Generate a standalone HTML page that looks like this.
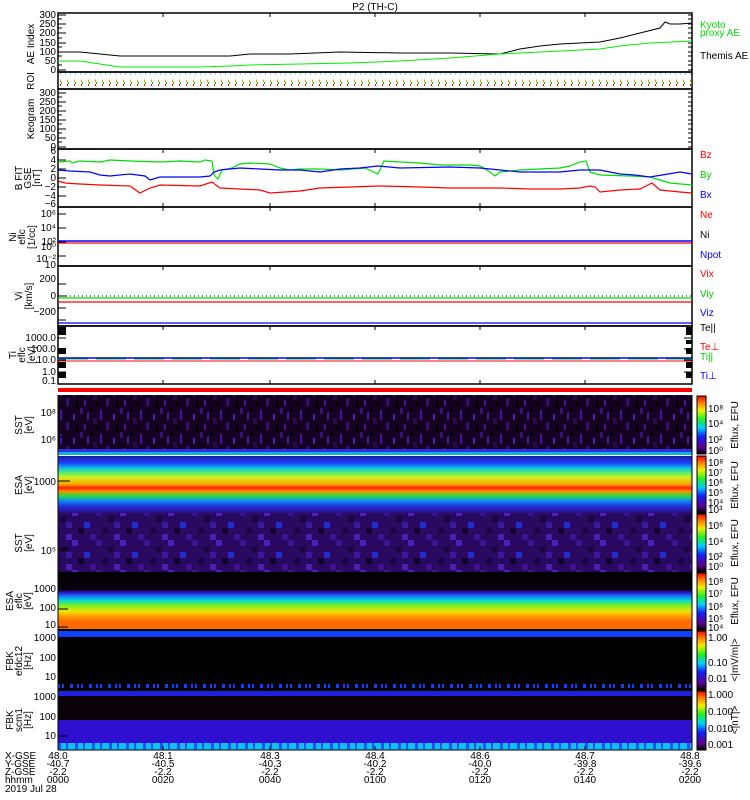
<!DOCTYPE html>
<html><head><meta charset="utf-8"><style>
body{margin:0;background:#fff;width:750px;height:800px;overflow:hidden}
svg{display:block}
text{font-family:"Liberation Sans",sans-serif;font-size:10px}
</style></head><body>
<svg width="750" height="800" viewBox="0 0 750 800" xmlns="http://www.w3.org/2000/svg">
<defs>
<linearGradient id="esa1" x1="0" y1="0" x2="0" y2="1">
<stop offset="0" stop-color="#1a1aa0"/><stop offset="0.12" stop-color="#1a40ff"/><stop offset="0.22" stop-color="#10c8e0"/><stop offset="0.3" stop-color="#60f060"/><stop offset="0.38" stop-color="#d8f020"/><stop offset="0.5" stop-color="#ffa000"/><stop offset="0.56" stop-color="#ff2000"/><stop offset="0.62" stop-color="#ff9000"/><stop offset="0.7" stop-color="#20e040"/><stop offset="0.78" stop-color="#1090f0"/><stop offset="0.88" stop-color="#2030e0"/><stop offset="1" stop-color="#2a1080"/>
</linearGradient>
<linearGradient id="esa2" x1="0" y1="0" x2="0" y2="1">
<stop offset="0" stop-color="#000"/><stop offset="0.3" stop-color="#080010"/><stop offset="0.35" stop-color="#3010c0"/><stop offset="0.42" stop-color="#1080ff"/><stop offset="0.5" stop-color="#10e0c0"/><stop offset="0.58" stop-color="#80f020"/><stop offset="0.68" stop-color="#f0e000"/><stop offset="0.76" stop-color="#ffa000"/><stop offset="0.85" stop-color="#ff6a00"/><stop offset="1" stop-color="#ff6a00"/>
</linearGradient>
<linearGradient id="cb1" x1="0" y1="1" x2="0" y2="0">
<stop offset="0" stop-color="#000"/><stop offset="0.12" stop-color="#600090"/><stop offset="0.3" stop-color="#1020ff"/><stop offset="0.45" stop-color="#00d0ff"/><stop offset="0.6" stop-color="#20f020"/><stop offset="0.75" stop-color="#f0f000"/><stop offset="0.88" stop-color="#ff8000"/><stop offset="1" stop-color="#ff0000"/>
</linearGradient>
<pattern id="noise" width="40" height="24" patternUnits="userSpaceOnUse">
<rect width="40" height="24" fill="#140020"/>
<rect x="0" y="0" width="3" height="6" fill="#3a1070"/><rect x="7" y="4" width="2" height="8" fill="#501890"/><rect x="13" y="10" width="4" height="6" fill="#2a0850"/><rect x="20" y="2" width="2" height="10" fill="#4a10a0"/><rect x="26" y="14" width="3" height="8" fill="#3a1070"/><rect x="33" y="6" width="2" height="6" fill="#5020a0"/><rect x="4" y="16" width="2" height="6" fill="#4a1090"/><rect x="16" y="18" width="3" height="4" fill="#000"/><rect x="36" y="18" width="3" height="6" fill="#000"/><rect x="10" y="0" width="2" height="4" fill="#000"/>
</pattern>
<pattern id="noise2" width="48" height="30" patternUnits="userSpaceOnUse">
<rect width="48" height="30" fill="#2a0a60"/>
<rect x="0" y="0" width="6" height="6" fill="#3c1490"/><rect x="12" y="6" width="6" height="6" fill="#1a0640"/><rect x="24" y="0" width="6" height="6" fill="#4a20c0"/><rect x="36" y="12" width="6" height="6" fill="#2030d0"/><rect x="6" y="18" width="6" height="6" fill="#1a0640"/><rect x="18" y="24" width="6" height="6" fill="#4a20b0"/><rect x="30" y="18" width="6" height="6" fill="#120430"/><rect x="42" y="24" width="6" height="6" fill="#3c1490"/><rect x="18" y="12" width="6" height="6" fill="#3a18a0"/>
</pattern>
</defs>

<text x="375" y="10" text-anchor="middle">P2 (TH-C)</text>

<g fill="none" stroke="#000" stroke-width="1.5">
<rect x="58" y="13" width="634" height="59"/>
<rect x="58" y="72" width="634" height="17"/>
<rect x="58" y="89" width="634" height="60"/>
<rect x="58" y="149" width="634" height="58"/>
<rect x="58" y="207" width="634" height="59"/>
<rect x="58" y="266" width="634" height="60"/>
<rect x="58" y="326" width="634" height="58"/>
</g>
<g stroke="#000" stroke-width="1">
<path d="M163 13v4M270 13v4M375 13v4M480 13v4M585 13v4M163 149v4M270 149v4M375 149v4M480 149v4M585 149v4M163 203v4M270 203v4M375 203v4M480 203v4M585 203v4M163 207v4M270 207v4M375 207v4M480 207v4M585 207v4M163 266v4M270 266v4M375 266v4M480 266v4M585 266v4M163 326v4M270 326v4M375 326v4M480 326v4M585 326v4M163 380v4M270 380v4M375 380v4M480 380v4M585 380v4"/>
</g>
<g stroke="#000">
<path d="M58 15h8M58 24h8M58 33h8M58 43h8M58 52h8M58 61h8M58 70h8M58 93h8M58 102h8M58 111h8M58 120h8M58 129h8M58 138h8M58 147h8"/>
<path d="M58 19h4M58 28h4M58 38h4M58 47h4M58 56h4M58 65h4M58 97h4M58 106h4M58 115h4M58 124h4M58 133h4M58 142h4" />
<path d="M688 15h4M688 19h4M688 24h4M688 28h4M688 33h4M688 38h4M688 43h4M688 47h4M688 52h4M688 56h4M688 61h4M688 65h4M688 70h4M688 93h4M688 97h4M688 102h4M688 106h4M688 111h4M688 115h4M688 120h4M688 124h4M688 129h4M688 133h4M688 138h4M688 142h4M688 147h4"/>
<path d="M58 160h8M58 169h8M58 178h8M58 187h8M58 196h8M58 214h8M58 228h8M58 242h8M58 256h8M58 284h8M58 296h8M58 308h8M58 320h8M58 338h8M58 349h8M58 360h8M58 372h8"/>
</g>
<g font-size="9" text-anchor="end">
<text x="56" y="18">300</text><text x="56" y="27">250</text><text x="56" y="36">200</text><text x="56" y="46">150</text><text x="56" y="55">100</text><text x="56" y="64">50</text><text x="56" y="73">0</text>
<text x="56" y="96">300</text><text x="56" y="105">250</text><text x="56" y="114">200</text><text x="56" y="123">150</text><text x="56" y="132">100</text><text x="56" y="141">50</text><text x="56" y="150">0</text>
<text x="56" y="154">6</text><text x="56" y="163">4</text><text x="56" y="172">2</text><text x="56" y="181">0</text><text x="56" y="190">−2</text><text x="56" y="199">−4</text><text x="56" y="207">−6</text>
<text x="56" y="217">10⁶</text><text x="56" y="231">10⁴</text><text x="56" y="245">10²</text><text x="56" y="250">10⁰</text><text x="56" y="262">10⁻²</text>
<text x="56" y="268">10</text><text x="56" y="282">200</text><text x="56" y="299">0</text><text x="56" y="315">−200</text>
<text x="56" y="341">1000.0</text><text x="56" y="352">100.0</text><text x="56" y="363">10.0</text><text x="56" y="375">1.0</text><text x="56" y="384">0.1</text>
<text x="56" y="416">10⁸</text><text x="56" y="443">10⁶</text>
<text x="56" y="485">1000</text>
<text x="56" y="554">10⁵</text>
<text x="56" y="592">1000</text><text x="56" y="611">100</text><text x="56" y="628">10</text>
<text x="56" y="641">1000</text><text x="56" y="661">100</text><text x="56" y="680">10</text>
<text x="56" y="700">1000</text><text x="56" y="720">100</text><text x="56" y="739">10</text>
</g>
<g font-size="9" text-anchor="middle">
<text transform="translate(34,44) rotate(-90)">AE Index</text>
<text transform="translate(34,81) rotate(-90)">ROI</text>
<text transform="translate(34,119) rotate(-90)">Keogram</text>
<text transform="translate(22,178) rotate(-90)">B FIT</text><text transform="translate(31,178) rotate(-90)">GSE</text><text transform="translate(40,178) rotate(-90)">[nT]</text>
<text transform="translate(16,237) rotate(-90)">Ni</text><text transform="translate(25,237) rotate(-90)">eflc</text><text transform="translate(35,237) rotate(-90)">[1/cc]</text>
<text transform="translate(22,296) rotate(-90)">Vi</text><text transform="translate(32,296) rotate(-90)">[km/s]</text>
<text transform="translate(16,355) rotate(-90)">Ti</text><text transform="translate(25,355) rotate(-90)">eflc</text><text transform="translate(35,355) rotate(-90)">[eV]</text>
<text transform="translate(22,425) rotate(-90)">SST</text><text transform="translate(32,425) rotate(-90)">[eV]</text>
<text transform="translate(22,485) rotate(-90)">ESA</text><text transform="translate(32,485) rotate(-90)">[eV]</text>
<text transform="translate(22,543) rotate(-90)">SST</text><text transform="translate(32,543) rotate(-90)">[eV]</text>
<text transform="translate(13,601) rotate(-90)">ESA</text><text transform="translate(22,601) rotate(-90)">eflc</text><text transform="translate(31,601) rotate(-90)">[eV]</text>
<text transform="translate(13,661) rotate(-90)">FBK</text><text transform="translate(22,661) rotate(-90)">efdc12</text><text transform="translate(31,661) rotate(-90)">[Hz]</text>
<text transform="translate(13,720) rotate(-90)">FBK</text><text transform="translate(22,720) rotate(-90)">scm1</text><text transform="translate(31,720) rotate(-90)">[Hz]</text>
</g>

<polyline fill="none" stroke="#000" stroke-width="1" points="58,52 80,52 100,54 120,56 180,56 230,56 250,54 290,54 340,52 400,53 450,53 500,54 520,49 540,46 560,44 600,42 620,38 640,33 660,28 665,22 670,24 680,24 692,23"/>
<polyline fill="none" stroke="#0e0" stroke-width="1" points="58,61 80,61 100,64 120,67 180,67 200,67 230,66 250,65 300,64 350,63 400,61 450,58 500,54 560,51 600,49 620,46 650,43 692,41"/>
<path d="M60 74H692" stroke="#0cc" stroke-width="1" stroke-dasharray="1 4"/>
<path d="M60 81H692" stroke="#eea000" stroke-width="3" stroke-dasharray="1 6"/>
<path d="M61 83H692" stroke="#0b0" stroke-width="2" stroke-dasharray="1 6"/>
<path d="M60 85H692" stroke="#f00" stroke-width="2" stroke-dasharray="1 6"/>

<polyline fill="none" stroke="#0d0" stroke-width="1.2" points="58,162 70,161 72,163 80,161 100,162 110,160 130,161 160,162 180,161 200,162 205,160 212,161 214,175 218,179 222,170 232,168 240,164 250,163 270,164 280,168 290,170 300,169 320,169 340,170 365,168 378,174 384,161 400,162 420,163 440,165 470,165 480,166 490,172 495,176 500,172 520,170 560,168 570,166 580,162 586,161 590,172 600,175 630,176 650,177 660,180 670,183 692,185"/>
<polyline fill="none" stroke="#00f" stroke-width="1.2" points="58,170 70,171 90,172 100,175 110,176 130,174 145,176 150,180 160,177 200,177 210,176 214,172 220,170 240,168 260,169 280,170 300,170 320,172 340,169 360,168 378,166 400,168 450,167 480,168 500,170 520,172 560,172 580,170 600,170 620,174 635,175 650,177 680,172 692,174"/>
<polyline fill="none" stroke="#f00" stroke-width="1.2" points="58,181 65,183 80,184 100,185 130,186 140,193 150,188 160,185 200,186 212,182 220,188 240,189 260,190 270,193 300,191 320,188 380,186 420,187 450,188 480,188 500,188 530,189 560,189 580,188 590,186 595,187 600,192 620,190 640,189 648,185 652,183 660,190 680,192 692,193"/>

<path d="M58 241H692" stroke="#00f" stroke-width="1.5"/>
<path d="M58 243H692" stroke="#f00" stroke-width="1.2"/>
<path d="M58 296H692" stroke="#000" stroke-dasharray="1 3"/>
<path d="M58 298H692" stroke="#0d0" stroke-width="1.2"/>
<path d="M58 302H692" stroke="#f00" stroke-width="1.2"/>
<path d="M58 323H692" stroke="#00f" stroke-width="1.2"/>
<path d="M58 361H692" stroke="#f00" stroke-width="1"/>
<path d="M58 359H692" stroke="#0d0" stroke-width="1" stroke-dasharray="30 8"/>
<path d="M58 358H692" stroke="#00f" stroke-width="1.5"/>
<g fill="#000"><rect x="58" y="327" width="8" height="8"/><rect x="58" y="348" width="8" height="6"/><rect x="58" y="362" width="8" height="6"/><rect x="58" y="372" width="8" height="6"/>
<rect x="686" y="327" width="6" height="8"/><rect x="686" y="340" width="6" height="4"/><rect x="686" y="348" width="6" height="6"/><rect x="686" y="362" width="6" height="6"/><rect x="686" y="372" width="6" height="6"/></g>
<g stroke="#000"><path d="M684 338h8M684 349h8M684 360h8M684 372h8"/></g>

<rect x="58" y="388" width="634" height="4" fill="#f00"/>

<rect x="58" y="395" width="634" height="54" fill="url(#noise)"/>
<rect x="58" y="449" width="634" height="3" fill="#3030e0"/>
<rect x="58" y="452" width="634" height="3" fill="#10b0e0"/>
<rect x="58" y="455" width="634" height="1" fill="#fff"/>
<rect x="58" y="456" width="634" height="57" fill="url(#esa1)"/>
<rect x="58" y="513" width="634" height="59" fill="url(#noise2)"/>
<rect x="58" y="572" width="634" height="58" fill="url(#esa2)"/>
<rect x="58" y="629" width="634" height="2" fill="#000"/>
<rect x="58" y="631" width="634" height="6" fill="#1040ff"/>
<rect x="58" y="637" width="634" height="54" fill="#000"/>
<path d="M58 686H692" stroke="#1040ff" stroke-width="4" stroke-dasharray="2 2 2 6 3 4"/>
<rect x="58" y="691" width="634" height="5" fill="#2020e0"/>
<rect x="58" y="696" width="634" height="24" fill="#0a0008"/>
<rect x="58" y="720" width="634" height="23" fill="#3010d0"/>
<rect x="58" y="743" width="634" height="7" fill="#10c0f0"/>
<path d="M58 746H692" stroke="#2050ff" stroke-width="6" stroke-dasharray="3 5 2 7"/>
<g stroke="#000" fill="none"><path d="M58 395V750M692 395V750M58 750H692"/>
<path d="M163 746v4M270 746v4M375 746v4M480 746v4M585 746v4"/></g>
<g stroke="#000"><path d="M58 407h8M58 437h8M58 481h12M58 549h12M58 590h10M58 609h10M58 627h10M58 638h10M58 658h10M58 677h10M58 697h10M58 717h10M58 736h10"/></g>

<g stroke="#000" stroke-width="1">
<rect x="697" y="396" width="9" height="58" fill="url(#cb1)"/>
<rect x="697" y="456" width="9" height="57" fill="url(#cb1)"/>
<rect x="697" y="514" width="9" height="58" fill="url(#cb1)"/>
<rect x="697" y="573" width="9" height="57" fill="url(#cb1)"/>
<rect x="697" y="631" width="9" height="59" fill="url(#cb1)"/>
<rect x="697" y="691" width="9" height="59" fill="url(#cb1)"/>
</g>
<g font-size="8">
<text x="708" y="412">10⁸</text><text x="708" y="427">10⁴</text><text x="708" y="443">10²</text><text x="708" y="454">10⁰</text>
<text x="708" y="466">10⁸</text><text x="708" y="476">10⁷</text><text x="708" y="486">10⁶</text><text x="708" y="496">10⁵</text><text x="708" y="506">10⁴</text><text x="708" y="513">10³</text>
<text x="708" y="529">10⁶</text><text x="708" y="545">10⁴</text><text x="708" y="560">10²</text><text x="708" y="570">10⁰</text>
<text x="708" y="585">10⁸</text><text x="708" y="597">10⁷</text><text x="708" y="610">10⁶</text><text x="708" y="622">10⁵</text><text x="708" y="631">10⁴</text>
<text x="708" y="641">1.00</text><text x="708" y="666">0.10</text><text x="708" y="682">0.01</text>
<text x="708" y="698">1.000</text><text x="708" y="715">0.100</text><text x="708" y="732">0.010</text><text x="708" y="748">0.001</text>
</g>
<g font-size="8" text-anchor="middle">
<text transform="translate(738,425) rotate(-90)">Eflux, EFU</text>
<text transform="translate(738,485) rotate(-90)">Eflux, EFU</text>
<text transform="translate(738,543) rotate(-90)">Eflux, EFU</text>
<text transform="translate(738,601) rotate(-90)">Eflux, EFU</text>
<text transform="translate(738,660) rotate(-90)">&lt;|mV/m|&gt;</text>
<text transform="translate(738,720) rotate(-90)">&lt;|nT|&gt;</text>
</g>

<g font-size="8">
<text x="700" y="28" fill="#0d0">Kyoto</text><text x="700" y="36" fill="#0d0">proxy AE</text>
<text x="700" y="59">Themis AE</text>
<text x="700" y="158" fill="#f00">Bz</text><text x="700" y="178" fill="#0c0">By</text><text x="700" y="198" fill="#00f">Bx</text>
<text x="700" y="218" fill="#f00">Ne</text><text x="700" y="238">Ni</text><text x="700" y="258" fill="#00f">Npot</text>
<text x="700" y="277" fill="#f00">Vix</text><text x="700" y="297" fill="#0c0">Viy</text><text x="700" y="316" fill="#00f">Viz</text>
<text x="700" y="331">Te||</text><text x="700" y="350" fill="#f00">Te⊥</text><text x="700" y="360" fill="#0c0">Ti||</text><text x="700" y="379" fill="#00f">Ti⊥</text>
</g>

<g font-size="9" font-family="Liberation Mono">
<text x="5" y="759">X-GSE</text><text x="5" y="767">Y-GSE</text><text x="5" y="775">Z-GSE</text><text x="5" y="783">hhmm</text><text x="5" y="792">2019 Jul 28</text>
</g>
<g font-size="9" text-anchor="middle">
<text x="58" y="759">48.0</text><text x="58" y="767">-40.7</text><text x="58" y="775">-2.2</text><text x="58" y="783">0000</text>
<text x="163" y="759">48.1</text><text x="163" y="767">-40.5</text><text x="163" y="775">-2.2</text><text x="163" y="783">0020</text>
<text x="270" y="759">48.3</text><text x="270" y="767">-40.3</text><text x="270" y="775">-2.2</text><text x="270" y="783">0040</text>
<text x="375" y="759">48.4</text><text x="375" y="767">-40.2</text><text x="375" y="775">-2.2</text><text x="375" y="783">0100</text>
<text x="480" y="759">48.6</text><text x="480" y="767">-40.0</text><text x="480" y="775">-2.2</text><text x="480" y="783">0120</text>
<text x="585" y="759">48.7</text><text x="585" y="767">-39.8</text><text x="585" y="775">-2.2</text><text x="585" y="783">0140</text>
<text x="690" y="759">48.8</text><text x="690" y="767">-39.6</text><text x="690" y="775">-2.2</text><text x="690" y="783">0200</text>
</g>
</svg>
</body></html>
